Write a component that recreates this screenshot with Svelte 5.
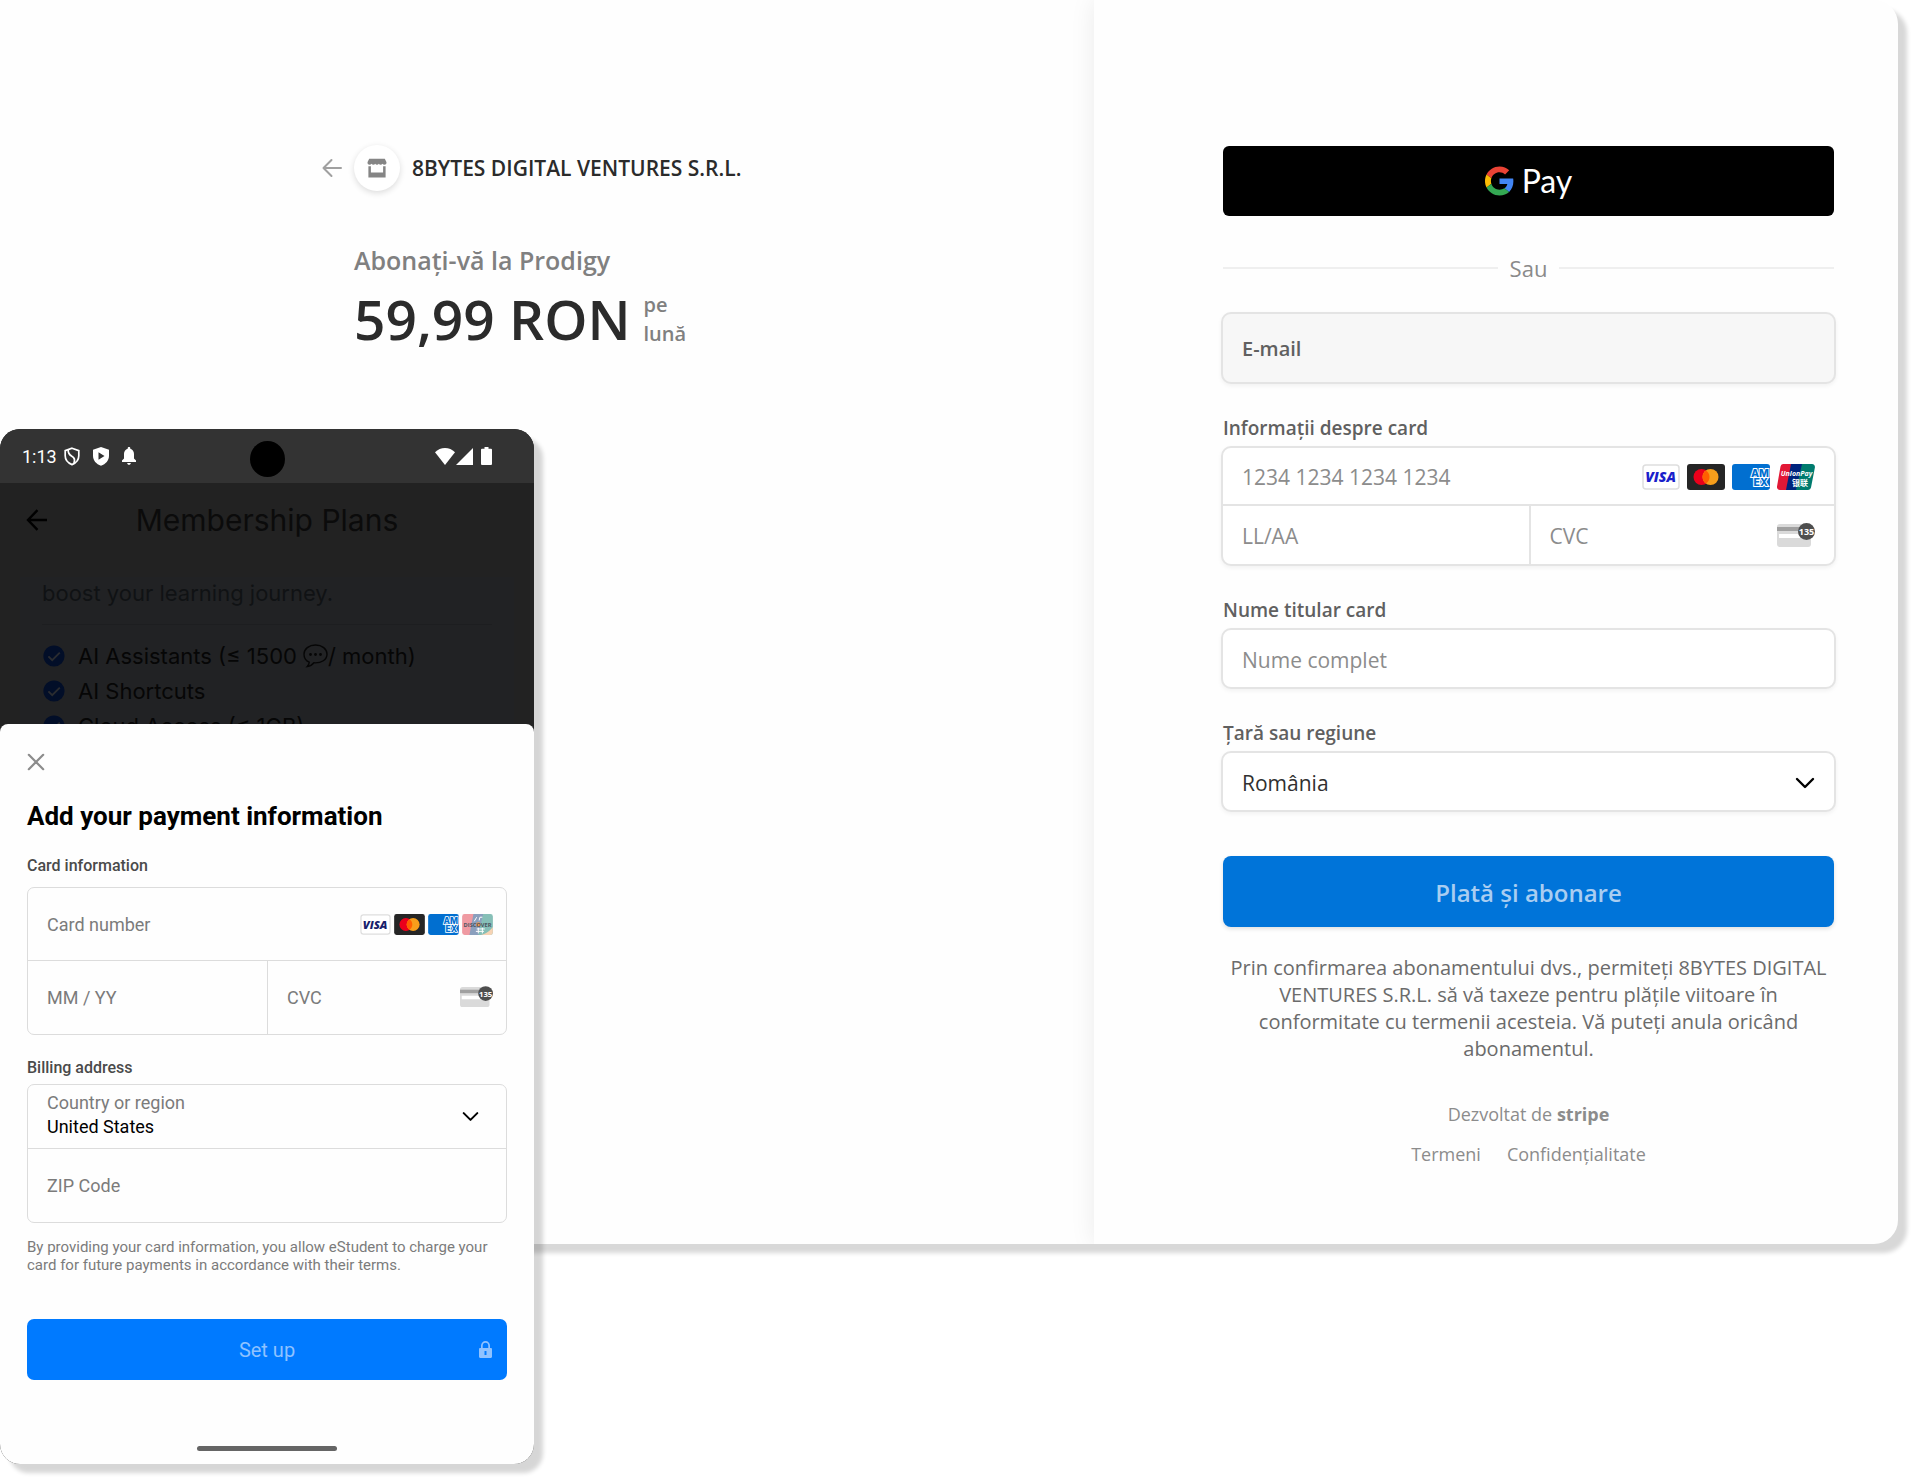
<script lang="ts">
  let email = $state('');
  let cardNumber = $state('');
  let expiry = $state('');
  let cvc = $state('');
  let holder = $state('');
  let mobileNumber = $state('');
  let mobileExpiry = $state('');
  let mobileCvc = $state('');
  let zip = $state('');
</script>

{#snippet visa(ink: string)}
  <svg class="brand" viewBox="0 0 38 26" aria-hidden="true">
    <rect x="1" y="1" width="36" height="24" rx="3" fill="#fff" stroke="#dedede" stroke-width="1.5" />
    <text x="18.500" y="18" text-anchor="middle" font-family="Open Sans, sans-serif" font-size="14" font-weight="800" font-style="italic" fill={ink}>VISA</text>
  </svg>
{/snippet}

{#snippet mastercard()}
  <svg class="brand" viewBox="0 0 38 26" aria-hidden="true">
    <rect width="38" height="26" rx="3" fill="#252525" />
    <circle cx="14.5" cy="13" r="8" fill="#eb001b" />
    <circle cx="23.5" cy="13" r="8" fill="#f79e1b" />
    <path d="M19 6.4a8 8 0 0 1 0 13.2a8 8 0 0 1 0-13.2z" fill="#ff5f00" />
  </svg>
{/snippet}

{#snippet amex()}
  <svg class="brand" viewBox="0 0 38 26" aria-hidden="true">
    <rect width="38" height="26" rx="3" fill="#016fd0" />
    <g font-family="Inter, sans-serif" font-size="10.5" font-weight="800" fill="#016fd0" stroke="#fff" stroke-width="2" paint-order="stroke">
      <text x="19" y="12.5">AM</text>
      <text x="21.500" y="22">EX</text>
    </g>
  </svg>
{/snippet}

{#snippet cvcCard()}
  <svg class="cvc-card" viewBox="0 0 38 26" aria-hidden="true">
    <rect y="1" width="34" height="23" rx="3" fill="#dadada" />
    <rect y="4" width="34" height="4" fill="#a0a0a0" />
    <rect x="2" y="11" width="27" height="4" fill="#fff" />
    <circle cx="29.5" cy="8.5" r="8.500" fill="#4e4e4e" />
    <text x="29.5" y="12" text-anchor="middle" font-family="Open Sans, sans-serif" font-size="9" font-weight="700" fill="#fff">135</text>
  </svg>
{/snippet}

{#snippet check()}
  <svg class="check" viewBox="0 0 22 22" aria-hidden="true">
    <circle cx="11" cy="11" r="10.6" fill="#020e28" />
    <path d="M5.4 11.4l3.8 3.8 7.6-7.6" fill="none" stroke="#2a2c30" stroke-width="1.9" />
  </svg>
{/snippet}

<div class="stage">
  <main class="checkout">
    <section class="summary">
      <header class="merchant">
        <button class="icon-button" aria-label="Înapoi">
          <svg width="20" height="20" viewBox="0 0 20 20" fill="none" stroke="#a0a0a0" stroke-width="2" stroke-linecap="round" stroke-linejoin="round"><path d="M19 10H1.5M9.5 2L1.5 10l8 8" /></svg>
        </button>
        <span class="avatar">
          <svg width="20" height="20" viewBox="0 0 20 20" aria-hidden="true">
            <path d="M2.2.8h15.6L19.4 4c.5 1.500-.6 2.800-2 2.800-.9 0-1.500-.4-1.900-1-.4.6-1.100 1-1.900 1s-1.400-.4-1.800-1c-.4.6-1 1-1.800 1s-1.400-.4-1.800-1c-.4.6-1 1-1.800 1s-1.500-.4-1.900-1c-.4.6-1 1-1.900 1C1.200 6.800.1 5.500.6 4z" fill="#858585" />
            <path d="M1.400 8.200h2.500v6.200h12.200V8.200h2.500v11.300H1.400z" fill="#858585" />
          </svg>
        </span>
        <h1>8BYTES DIGITAL VENTURES S.R.L.</h1>
      </header>
      <div class="plan">
        <p class="plan-name">Abonați-vă la Prodigy</p>
        <p class="price"><strong>59,99 RON</strong><span>pe<br />lună</span></p>
      </div>
    </section>

    <form class="payment" onsubmit={(e) => e.preventDefault()}>
      <button type="button" class="gpay" aria-label="Google Pay">
        <svg width="29" height="30" viewBox="0 0 48 48" aria-hidden="true">
          <path fill="#EA4335" d="M24 9.500c3.540 0 6.710 1.220 9.210 3.600l6.850-6.850C35.900 2.380 30.470 0 24 0 14.620 0 6.510 5.380 2.560 13.220l7.980 6.190C12.430 13.720 17.740 9.500 24 9.500z" />
          <path fill="#4285F4" d="M46.980 24.550c0-1.570-.15-3.090-.38-4.550H24v9.020h12.940c-.58 2.960-2.260 5.480-4.780 7.180l7.730 6c4.510-4.180 7.090-10.360 7.090-17.650z" />
          <path fill="#FBBC05" d="M10.530 28.590c-.48-1.450-.76-2.990-.76-4.590s.27-3.140.76-4.590l-7.980-6.190C.92 16.460 0 20.120 0 24c0 3.880.92 7.540 2.560 10.780l7.970-6.190z" />
          <path fill="#34A853" d="M24 48c6.480 0 11.930-2.130 15.890-5.810l-7.730-6c-2.150 1.450-4.920 2.300-8.160 2.300-6.260 0-11.570-4.220-13.470-9.910l-7.980 6.190C6.510 42.620 14.620 48 24 48z" />
        </svg>
        <span>Pay</span>
      </button>

      <div class="divider"><span>Sau</span></div>

      <div class="control email">
        <label for="email">E-mail</label>
        <input id="email" type="email" bind:value={email} />
      </div>

      <fieldset class="field">
        <legend>Informații despre card</legend>
        <div class="control card-grid">
          <div class="cell wide">
            <input aria-label="Numărul cardului" placeholder="1234 1234 1234 1234" bind:value={cardNumber} />
            <span class="brands">
              {@render visa('#1a1fcb')}
              {@render mastercard()}
              {@render amex()}
              <svg class="brand" viewBox="0 0 38 26" aria-hidden="true">
                <path d="M6 0h10l-5 26H3a3 3 0 0 1-3-3.500L3.500 2.500A3 3 0 0 1 6 0z" fill="#e21836" />
                <path d="M14 0h12l-5 26H9z" fill="#00247d" />
                <path d="M25 0h10a3 3 0 0 1 2.900 3.500L34 23.500a3 3 0 0 1-3 2.500H19z" fill="#007b6e" />
                <text x="19.500" y="12" text-anchor="middle" font-family="Open Sans, sans-serif" font-size="7" font-weight="700" font-style="italic" fill="#fff">UnionPay</text>
                <text x="23" y="21.500" text-anchor="middle" font-family="Noto Sans CJK SC, sans-serif" font-size="8" font-weight="700" fill="#fff">银联</text>
              </svg>
            </span>
          </div>
          <div class="cell"><input aria-label="Data expirării" placeholder="LL/AA" bind:value={expiry} /></div>
          <div class="cell">
            <input aria-label="CVC" placeholder="CVC" bind:value={cvc} />
            {@render cvcCard()}
          </div>
        </div>
      </fieldset>

      <div class="field">
        <label for="holder">Nume titular card</label>
        <div class="control single"><input id="holder" placeholder="Nume complet" bind:value={holder} /></div>
      </div>

      <div class="field">
        <label for="country">Țară sau regiune</label>
        <div class="control single">
          <select id="country"><option>România</option></select>
          <svg class="chevron" viewBox="0 0 20 12" aria-hidden="true"><path d="M2 2l8 8 8-8" /></svg>
        </div>
      </div>

      <button class="subscribe">Plată și abonare</button>

      <p class="terms">Prin confirmarea abonamentului dvs., permiteți 8BYTES DIGITAL VENTURES S.R.L. să vă taxeze pentru plățile viitoare în conformitate cu termenii acesteia. Vă puteți anula oricând abonamentul.</p>

      <footer>
        <a href="#stripe">Dezvoltat de <b>stripe</b></a>
        <nav><a href="#terms">Termeni</a><a href="#privacy">Confidențialitate</a></nav>
      </footer>
    </form>
  </main>

  <section class="phone">
    <div class="status">
      <span class="clock">1:13</span>
      <svg width="16" height="19" viewBox="0 0 16 19" aria-hidden="true" fill="none" stroke="#fff" stroke-width="1.700"><path d="M8 1.200l6.800 2.500v5.100c0 4-2.800 7.200-6.800 8.800-4-1.600-6.800-4.800-6.800-8.800V3.700z" /><path d="M4.200 3c-.2 3.300.8 4.600 3.600 6.200 3 1.700 3.400 4 2 6.800" /></svg>
      <svg width="16" height="19" viewBox="0 0 16 19" aria-hidden="true"><path fill="#fff" fill-rule="evenodd" d="M8 0l8 2.800v6c0 4.600-3.200 8.400-8 10-4.800-1.600-8-5.400-8-10v-6zM5.500 5.300v7.400l6-3.700z" /></svg>
      <svg width="14" height="18" viewBox="0 0 14 18" aria-hidden="true"><path fill="#fff" d="M7 0c.8 0 1.300.5 1.300 1.300v.4C10.700 2.300 12 4.400 12 7v4.500l2 2V15H0v-1.500l2-2V7c0-2.600 1.300-4.700 3.700-5.300v-.4C5.700.5 6.200 0 7 0zM5.200 16h3.600c0 1-.8 1.800-1.800 1.800S5.200 17 5.200 16z" /></svg>
      <span class="camera"></span>
      <span class="radio">
        <svg width="20" height="17" viewBox="0 0 20 17" aria-hidden="true"><path fill="#fff" d="M10 17L0 4.200C2.800 1.600 6.200 0 10 0s7.200 1.600 10 4.200z" /></svg>
        <svg width="17" height="17" viewBox="0 0 17 17" aria-hidden="true"><path fill="#fff" d="M17 0v17H0z" /></svg>
        <svg class="battery" width="11" height="18" viewBox="0 0 11 18" aria-hidden="true"><path fill="#fff" d="M3.500 0h4v1.800H10a1 1 0 0 1 1 1V17a1 1 0 0 1-1 1H1a1 1 0 0 1-1-1V2.800a1 1 0 0 1 1-1h2.500z" /></svg>
      </span>
    </div>

    <div class="plans">
      <div class="plans-bar">
        <svg width="21" height="22" viewBox="0 0 21 22" aria-hidden="true" fill="none" stroke="#000" stroke-width="2.400"><path d="M21 11H2M11.500 1.200L2 11l9.500 9.800" /></svg>
        <h2>Membership Plans</h2>
      </div>
      <div class="plan-card">
        <p>boost your learning journey.</p>
        <ul>
          <li>{@render check()}<span>AI Assistants (≤ 1500</span><svg class="bubble" width="25" height="24" viewBox="0 0 25 24" aria-hidden="true"><path d="M12.500 1C6 1 1 5 1 10.200c0 4 2.300 6.700 5.200 7.900-.1 2-.8 3.300-1.900 4.400 3.300-.4 5.300-2 6.600-3.700 7.600.5 13.100-3.200 13.100-8.600C24 5 19 1 12.500 1z" fill="none" stroke="#060606" stroke-width="1.400" /><g fill="#060606"><circle cx="7.500" cy="10.500" r="1.400" /><circle cx="12.500" cy="10.500" r="1.400" /><circle cx="17.500" cy="10.500" r="1.400" /></g></svg><span>/ month)</span></li>
          <li>{@render check()}<span>AI Shortcuts</span></li>
          <li>{@render check()}<span>Cloud Access (≤ 1GB)</span></li>
        </ul>
      </div>
    </div>

    <form class="sheet" onsubmit={(e) => e.preventDefault()}>
      <button type="button" class="icon-button close" aria-label="Close">
        <svg width="18" height="18" viewBox="0 0 18 18" fill="none" stroke="#8c8c8c" stroke-width="2.200" stroke-linecap="round"><path d="M1.800 1.800l14.400 14.400M16.200 1.800L1.800 16.200" /></svg>
      </button>
      <h2>Add your payment information</h2>

      <h3>Card information</h3>
      <div class="group card-grid">
        <div class="cell wide">
          <input aria-label="Card number" placeholder="Card number" bind:value={mobileNumber} />
          <span class="brands">
            {@render visa('#171e6c')}
            {@render mastercard()}
            {@render amex()}
            <svg class="brand" viewBox="0 0 38 26" aria-hidden="true">
              <path d="M3 0h13l-5 26H3a3 3 0 0 1-3-3V3a3 3 0 0 1 3-3z" fill="#ef9aa2" />
              <path d="M14 0h13l-5 26H9z" fill="#8a9fbd" />
              <path d="M26 0h9a3 3 0 0 1 3 3v20a3 3 0 0 1-3 3H20z" fill="#86bfb7" />
              <path d="M38 16v7a3 3 0 0 1-3 3H23c7-2 11-5 15-10z" fill="#f6d3b4" />
              <circle cx="20" cy="13" r="2.800" fill="#f39a4a" />
              <text x="19" y="15.500" text-anchor="middle" font-family="Open Sans, sans-serif" font-size="7" font-weight="700" fill="#4b5560">DISCOVER</text>
              <path d="M18 18.500h10M17 21.500h10M20 17v7M25 17v7M15 9l3-5M21 8l1-4h3" fill="none" stroke="#fff" stroke-width="1.200" />
            </svg>
          </span>
        </div>
        <div class="cell"><input aria-label="Expiration date" placeholder="MM / YY" bind:value={mobileExpiry} /></div>
        <div class="cell">
          <input aria-label="CVC" placeholder="CVC" bind:value={mobileCvc} />
          {@render cvcCard()}
        </div>
      </div>

      <h3>Billing address</h3>
      <div class="group">
        <div class="region">
          <div>
            <label for="region">Country or region</label>
            <select id="region"><option>United States</option></select>
          </div>
          <svg class="chevron" viewBox="0 0 20 12" aria-hidden="true"><path d="M2 2l8 8 8-8" /></svg>
        </div>
        <div class="cell"><input aria-label="ZIP Code" placeholder="ZIP Code" bind:value={zip} /></div>
      </div>

      <p class="notice">By providing your card information, you allow eStudent to charge your card for future payments in accordance with their terms.</p>

      <button class="setup">
        <span>Set up</span>
        <svg width="13" height="17" viewBox="0 0 13 17" aria-hidden="true"><path fill="#8fc2ff" fill-rule="evenodd" d="M2 7V4.700a4.500 4.700 0 0 1 9 0V7h.8c.7 0 1.200.5 1.200 1.200v7.600c0 .7-.5 1.200-1.200 1.200H1.200C.5 17 0 16.500 0 15.800V8.200C0 7.500.5 7 1.200 7zm1.700 0h5.600V4.700a2.800 3 0 0 0-5.600 0zM5.500 10v4h2v-4z" /></svg>
      </button>
      <span class="home-bar"></span>
    </form>
  </section>
</div>

<style>
  :global(body) {
    background: #fff;
  }

  .stage,
  .stage * {
    box-sizing: border-box;
  }

  .stage {
    display: grid;
    align-items: start;
    min-height: 100vh;
    font-family: 'Open Sans', 'Noto Sans', sans-serif;
  }

  h1, h2, h3, p, ul, fieldset {
    margin: 0;
    padding: 0;
    border: 0;
    list-style: none;
  }

  fieldset {
    min-width: 0;
  }

  button, input, select {
    margin: 0;
    padding: 0;
    border: 0;
    background: none;
    font: inherit;
    color: inherit;
  }

  input, select {
    flex: 1;
    width: 100%;
    min-width: 0;
    outline: 0;
    appearance: none;
  }

  svg {
    display: block;
    flex: none;
  }

  a {
    color: inherit;
    text-decoration: none;
  }

  .icon-button {
    display: flex;
  }

  /* Desktop checkout */
  .checkout {
    grid-area: 1 / 1;
    display: grid;
    grid-template-columns: 1094fr 804fr;
    min-height: 1244px;
    margin-right: 14px;
    overflow: hidden;
    border-radius: 0 24px 24px 0;
    background: #fefefe;
    box-shadow: 9px 9px 4px #d8d8d8;
  }

  .summary {
    padding: 145px 32px 0 322px;
  }

  .merchant {
    display: flex;
    align-items: center;
    gap: 12px;
  }

  .avatar {
    display: grid;
    place-items: center;
    width: 46px;
    height: 46px;
    border-radius: 50%;
    background: #fff;
    box-shadow: 0 2px 6px rgba(0, 0, 0, 0.14);
  }

  h1 {
    font-size: 21px;
    font-weight: 600;
    line-height: 32px;
    color: #2b2b2b;
  }

  .plan {
    padding: 51px 0 0 32px;
  }

  .plan-name {
    font-size: 25px;
    font-weight: 600;
    line-height: 36px;
    color: #808080;
  }

  .price {
    display: flex;
    align-items: center;
    gap: 13px;
    font-size: 20px;
    font-weight: 600;
    line-height: 29px;
    color: #808080;
  }

  .price strong {
    font-size: 55px;
    font-weight: 600;
    line-height: 82px;
    color: #2b2b2b;
  }

  .payment {
    padding: 146px 64px 0 129px;
    box-shadow: 0 0 24px rgba(0, 0, 0, 0.08);
  }

  .gpay {
    display: flex;
    align-items: center;
    justify-content: center;
    gap: 8px;
    width: 100%;
    height: 70px;
    border-radius: 6px;
    background: #000;
    font-family: Lato, sans-serif;
    font-size: 32px;
    line-height: 36px;
    color: #fff;
  }

  .divider {
    display: flex;
    align-items: center;
    gap: 12px;
    margin: 36px 0 28px;
    font-size: 22px;
    line-height: 32px;
    color: #8a8a8a;
  }

  .divider::before,
  .divider::after {
    content: '';
    flex: 1;
    height: 2px;
    background: #efefef;
  }

  .control {
    margin: 0 -2px;
    border: 2px solid #e4e4e4;
    border-radius: 10px;
    background: #fff;
    box-shadow: 0 2px 4px rgba(0, 0, 0, 0.05);
    font-size: 21px;
    color: #303030;
  }

  .email {
    display: flex;
    align-items: center;
    gap: 12px;
    height: 72px;
    padding: 0 19px;
    background: #f7f7f7;
    font-size: 20px;
  }

  .email label {
    font-weight: 600;
    color: #606060;
  }

  .field {
    margin-top: 31px;
  }

  .field > label,
  .field > legend {
    display: block;
    padding: 0 0 5px;
    font-size: 19px;
    font-weight: 600;
    line-height: 26px;
    color: #606060;
  }

  .card-grid {
    display: grid;
    grid-template-columns: 1fr 1fr;
  }

  .cell {
    display: flex;
    align-items: center;
    gap: 12px;
    height: 58px;
    padding: 2px 19px 0;
  }

  .cell.wide {
    grid-column: 1 / -1;
    border-bottom: 2px solid #e4e4e4;
  }

  .cell:last-child:not(:only-child) {
    border-left: 2px solid #e4e4e4;
  }

  ::placeholder {
    color: #8c8c8c;
    opacity: 1;
  }

  .brands {
    display: flex;
    gap: 7px;
  }

  .brand,
  .cvc-card {
    width: 38px;
    height: 26px;
  }

  .single {
    display: flex;
    align-items: center;
    height: 61px;
    padding: 2px 19px 0;
  }

  .chevron {
    width: 20px;
    height: 12px;
    fill: none;
    stroke: #000;
    stroke-width: 2.4;
    stroke-linecap: round;
    stroke-linejoin: round;
  }

  .subscribe {
    width: 100%;
    height: 71px;
    margin-top: 44px;
    padding-top: 2px;
    border-radius: 8px;
    background: #0074d9;
    box-shadow: 0 2px 4px rgba(0, 0, 0, 0.12);
    font-size: 24px;
    font-weight: 600;
    color: #a9cdf1;
  }

  .terms {
    margin: 27px -2px 0;
    font-size: 20px;
    line-height: 27px;
    text-align: center;
    color: #6b6b6b;
  }

  footer {
    display: flex;
    flex-direction: column;
    align-items: center;
    gap: 12px;
    margin-top: 38px;
    font-size: 18px;
    line-height: 28px;
    color: #8c8c8c;
  }

  footer b {
    font-weight: 700;
  }

  footer nav {
    display: flex;
    gap: 26px;
  }

  /* Mobile payment sheet */
  .phone {
    grid-area: 1 / 1;
    z-index: 1;
    width: min(534px, 100%);
    margin: 429px 0 15px;
    overflow: hidden;
    border-radius: 20px;
    background: #222;
    box-shadow: 9px 9px 4px rgba(0, 0, 0, 0.16);
    font-family: Roboto, sans-serif;
  }

  .status {
    position: relative;
    display: flex;
    align-items: center;
    gap: 13px;
    height: 54px;
    padding: 0 42px 0 22px;
    background: #333;
    color: #fff;
  }

  .clock {
    margin-right: -6px;
    font-size: 18px;
  }

  .camera {
    position: absolute;
    top: 12px;
    left: calc(50% - 17px);
    width: 35px;
    height: 36px;
    border-radius: 50%;
    background: #000;
  }

  .radio {
    display: flex;
    align-items: center;
    gap: 1px;
    margin-left: auto;
  }

  .battery {
    margin-left: 7px;
  }

  .plans {
    height: 241px;
    padding: 0 20px;
    overflow: hidden;
    font-family: Inter, Lato, sans-serif;
    background: #222;
  }

  .plans-bar {
    display: grid;
    grid-template-columns: 28px 1fr 28px;
    align-items: center;
    height: 74px;
    padding: 0 6px;
  }

  .plans-bar h2 {
    font-size: 30px;
    font-weight: 400;
    text-align: center;
    color: #0b0b0b;
  }

  .plan-card {
    margin-top: 20px;
    padding: 0 22px;
    background: #212224;
  }

  .plan-card p {
    padding-bottom: 15px;
    border-bottom: 1px solid #1d1e20;
    font-size: 22px;
    line-height: 32px;
    color: #101214;
  }

  .plan-card ul {
    padding-top: 13px;
  }

  .plan-card li {
    display: flex;
    align-items: center;
    height: 35px;
    font-size: 22px;
    color: #060606;
    white-space: pre;
  }

  .check {
    width: 22px;
    height: 22px;
    margin: 0 13px 0 1px;
  }

  .bubble {
    margin-left: 6px;
  }

  .sheet {
    display: flex;
    flex-direction: column;
    height: 740px;
    padding: 29px 27px 13px;
    border-radius: 8px 8px 0 0;
    background: #fefefe;
  }

  .sheet .close {
    align-self: flex-start;
  }

  .sheet h2 {
    margin: 27px 0 22px;
    font-size: 26px;
    font-weight: 700;
    line-height: 36px;
    color: #000;
  }

  .sheet h3 {
    padding-bottom: 11px;
    font-size: 16px;
    font-weight: 500;
    line-height: 20px;
    color: #4a4a4a;
  }

  .group {
    border: 1px solid #dcdcdc;
    border-radius: 7px;
    font-size: 18px;
    color: #000;
  }

  .sheet .group + h3 {
    margin-top: 23px;
    padding-bottom: 6px;
  }

  .group .cell {
    height: 73px;
    padding: 0 13px 0 19px;
  }

  .group .cell.wide {
    border-bottom: 1px solid #dcdcdc;
  }

  .group .cell:last-child:not(:only-child) {
    border-left: 1px solid #dcdcdc;
  }

  .group ::placeholder {
    color: #7b7b7b;
  }

  .group .brands {
    gap: 3px;
  }

  .group .brand {
    width: 31px;
    height: 21px;
  }

  .group .cvc-card {
    width: 33px;
    height: 23px;
  }

  .region {
    display: flex;
    align-items: center;
    justify-content: space-between;
    height: 64px;
    padding: 0 27px 0 19px;
    border-bottom: 1px solid #dcdcdc;
  }

  .region > div {
    padding-bottom: 4px;
  }

  .region .chevron {
    width: 17px;
    height: 11px;
  }

  .region label,
  .region select {
    display: block;
    line-height: 24px;
    color: #7b7b7b;
  }

  .region select {
    color: #000;
  }

  .group .region + .cell:last-child {
    border-left: 0;
  }

  .notice {
    margin-top: 15px;
    font-size: 15px;
    line-height: 18px;
    color: #7b7b7b;
  }

  .setup {
    display: grid;
    grid-template-columns: 13px 1fr 13px;
    align-items: center;
    height: 61px;
    margin-top: 45px;
    padding: 0 15px;
    border-radius: 7px;
    background: #007aff;
    font-size: 20px;
    color: #8fc2ff;
  }

  .setup span {
    grid-column: 2;
  }

  .home-bar {
    align-self: center;
    width: 140px;
    height: 5px;
    margin-top: auto;
    border-radius: 3px;
    background: #656565;
  }
</style>
